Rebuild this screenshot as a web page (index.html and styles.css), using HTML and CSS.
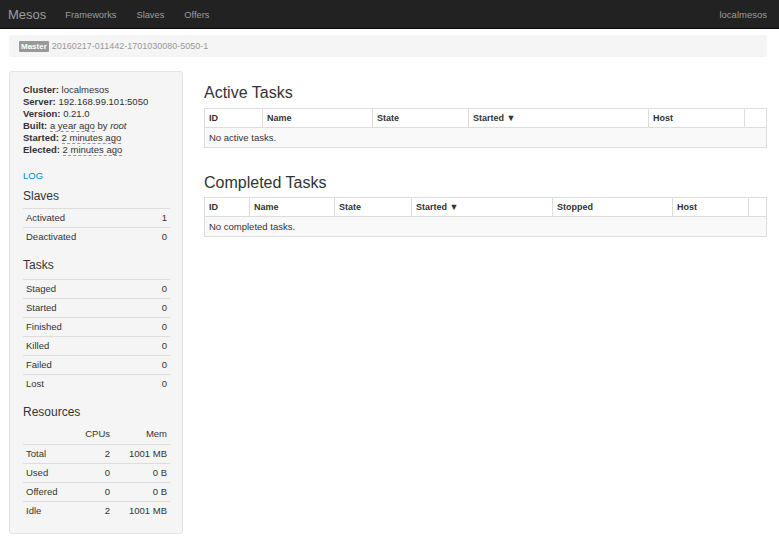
FILE: index.html
```html
<!DOCTYPE html>
<html>
<head>
<meta charset="utf-8">
<link rel="stylesheet" href="styles.css">
</head>
<body>
<div class="navbar">
  <div class="nav-inner">
    <span class="brand">Mesos</span>
    <span class="nav-link">Frameworks</span>
    <span class="nav-link">Slaves</span>
    <span class="nav-link">Offers</span>
    <span class="nav-right">localmesos</span>
  </div>
</div>
<div class="container">
  <div class="breadcrumb">
    <span class="label">Master</span>
    <span class="crumb-text">20160217-011442-1701030080-5050-1</span>
  </div>
  <div class="layout">
    <div class="well">
      <div class="info">
        <div><b>Cluster:</b> localmesos</div>
        <div><b>Server:</b> 192.168.99.101:5050</div>
        <div><b>Version:</b> 0.21.0</div>
        <div><b>Built:</b> <abbr>a year ago</abbr> by <em>root</em></div>
        <div><b>Started:</b> <abbr>2 minutes ago</abbr></div>
        <div><b>Elected:</b> <abbr>2 minutes ago</abbr></div>
      </div>
      <div class="log">LOG</div>
      <h4 class="side-h first">Slaves</h4>
      <table class="side-table">
        <tr><td>Activated</td><td class="num">1</td></tr>
        <tr><td>Deactivated</td><td class="num">0</td></tr>
      </table>
      <h4 class="side-h">Tasks</h4>
      <table class="side-table">
        <tr><td>Staged</td><td class="num">0</td></tr>
        <tr><td>Started</td><td class="num">0</td></tr>
        <tr><td>Finished</td><td class="num">0</td></tr>
        <tr><td>Killed</td><td class="num">0</td></tr>
        <tr><td>Failed</td><td class="num">0</td></tr>
        <tr><td>Lost</td><td class="num">0</td></tr>
      </table>
      <h4 class="side-h last">Resources</h4>
      <table class="side-table res">
        <colgroup><col class="c-label"><col class="c-cpu"><col class="c-mem"></colgroup>
        <tr class="head"><td></td><td class="num">CPUs</td><td class="num">Mem</td></tr>
        <tr><td>Total</td><td class="num">2</td><td class="num">1001 MB</td></tr>
        <tr><td>Used</td><td class="num">0</td><td class="num">0 B</td></tr>
        <tr><td>Offered</td><td class="num">0</td><td class="num">0 B</td></tr>
        <tr><td>Idle</td><td class="num">2</td><td class="num">1001 MB</td></tr>
      </table>
    </div>
    <div class="main">
      <h3 class="main-h">Active Tasks</h3>
      <table class="task-table">
        <colgroup>
          <col class="a1"><col class="a2"><col class="a3"><col class="a4"><col class="a5"><col>
        </colgroup>
        <tr><th>ID</th><th>Name</th><th>State</th><th>Started ▼</th><th>Host</th><th></th></tr>
        <tr class="empty"><td colspan="6">No active tasks.</td></tr>
      </table>
      <h3 class="main-h second">Completed Tasks</h3>
      <table class="task-table">
        <colgroup>
          <col class="b1"><col class="b2"><col class="b3"><col class="b4"><col class="b5"><col class="b6"><col>
        </colgroup>
        <tr><th>ID</th><th>Name</th><th>State</th><th>Started ▼</th><th>Stopped</th><th>Host</th><th></th></tr>
        <tr class="empty"><td colspan="7">No completed tasks.</td></tr>
      </table>
    </div>
  </div>
</div>
</body>
</html>
```
FILE: styles.css
```css
* { box-sizing: border-box; }
html, body { margin: 0; padding: 0; background: #fff; }
body {
  font-family: "Liberation Sans", Arial, sans-serif;
  font-size: 9.5px;
  color: #333;
  line-height: 12px;
}
.navbar {
  height: 29px;
  background: #222;
  border-bottom: 1px solid #080808;
}
.nav-inner {
  display: flex;
  align-items: center;
  height: 28px;
  padding: 2px 12px 0 8px;
}
.brand {
  font-size: 13px;
  color: #9d9d9d;
  margin-right: 9px;
}
.nav-link {
  font-size: 9.3px;
  color: #9d9d9d;
  padding: 0 10px;
}
.nav-right {
  margin-left: auto;
  color: #9d9d9d;
}
.container {
  width: 758px;
  margin-left: 9px;
}
.breadcrumb {
  margin-top: 6px;
  height: 22px;
  background: #f5f5f5;
  border-radius: 3px;
  display: flex;
  align-items: center;
  padding-left: 10px;
}
.label {
  display: inline-block;
  background: #999;
  color: #fff;
  font-size: 8px;
  font-weight: bold;
  line-height: 11px;
  height: 11px;
  padding: 0 2px;
  margin-right: 3px;
  border-radius: 1px;
}
.crumb-text { color: #999; font-size: 9px; }
.layout {
  display: flex;
  margin-top: 14px;
  gap: 21px;
}
.well {
  width: 174px;
  height: 463px;
  background: #f5f5f5;
  border: 1px solid #e3e3e3;
  border-radius: 3px;
  padding: 12px 12px 12px 13px;
}
.info b { font-weight: bold; }
.info em { font-style: oblique; font-synthesis: style; }
abbr {
  text-decoration: none;
  border-bottom: 1px dashed #999;
}
.log {
  margin-top: 14px;
  color: #08c;
}
.side-h {
  margin: 10px 0 6px 0;
  font-size: 12px;
  font-weight: normal;
  line-height: 16px;
  color: #333;
}
.side-h.first { margin: 6px 0 4px 0; }
.side-h.last { margin: 11px 0 5px 0; }
.side-table {
  width: 147px;
  border-collapse: collapse;
  table-layout: fixed;
}
.side-table td {
  height: 19px;
  padding: 0 3px;
  border-top: 1px solid #ddd;
  vertical-align: middle;
  line-height: 12px;
}
.side-table .num { text-align: right; }
.side-table tr.head td { border-top: none; }
.c-label { width: 52px; }
.c-cpu { width: 38px; }
.c-mem { width: 57px; }
.main { flex: 1; }
.main-h {
  margin: 12px 0 5px 0;
  font-size: 16px;
  font-weight: normal;
  line-height: 20px;
  color: #333;
}
.main-h.second { margin: 25px 0 4px 0; }
.task-table {
  width: 563px;
  border-collapse: collapse;
  table-layout: fixed;
  border: 1px solid #ddd;
}
.task-table th, .task-table td {
  height: 19px;
  padding: 0 4px;
  border: 1px solid #ddd;
  text-align: left;
  vertical-align: middle;
  line-height: 12px;
}
.task-table th {
  font-weight: bold;
  font-size: 9px;
  color: #333;
}
.task-table tr.empty td {
  background: #f9f9f9;
  height: 20px;
}
.a1 { width: 58px; }
.a2 { width: 110px; }
.a3 { width: 96px; }
.a4 { width: 180px; }
.a5 { width: 96px; }
.b1 { width: 45px; }
.b2 { width: 85px; }
.b3 { width: 77px; }
.b4 { width: 141px; }
.b5 { width: 120px; }
.b6 { width: 76px; }
```
